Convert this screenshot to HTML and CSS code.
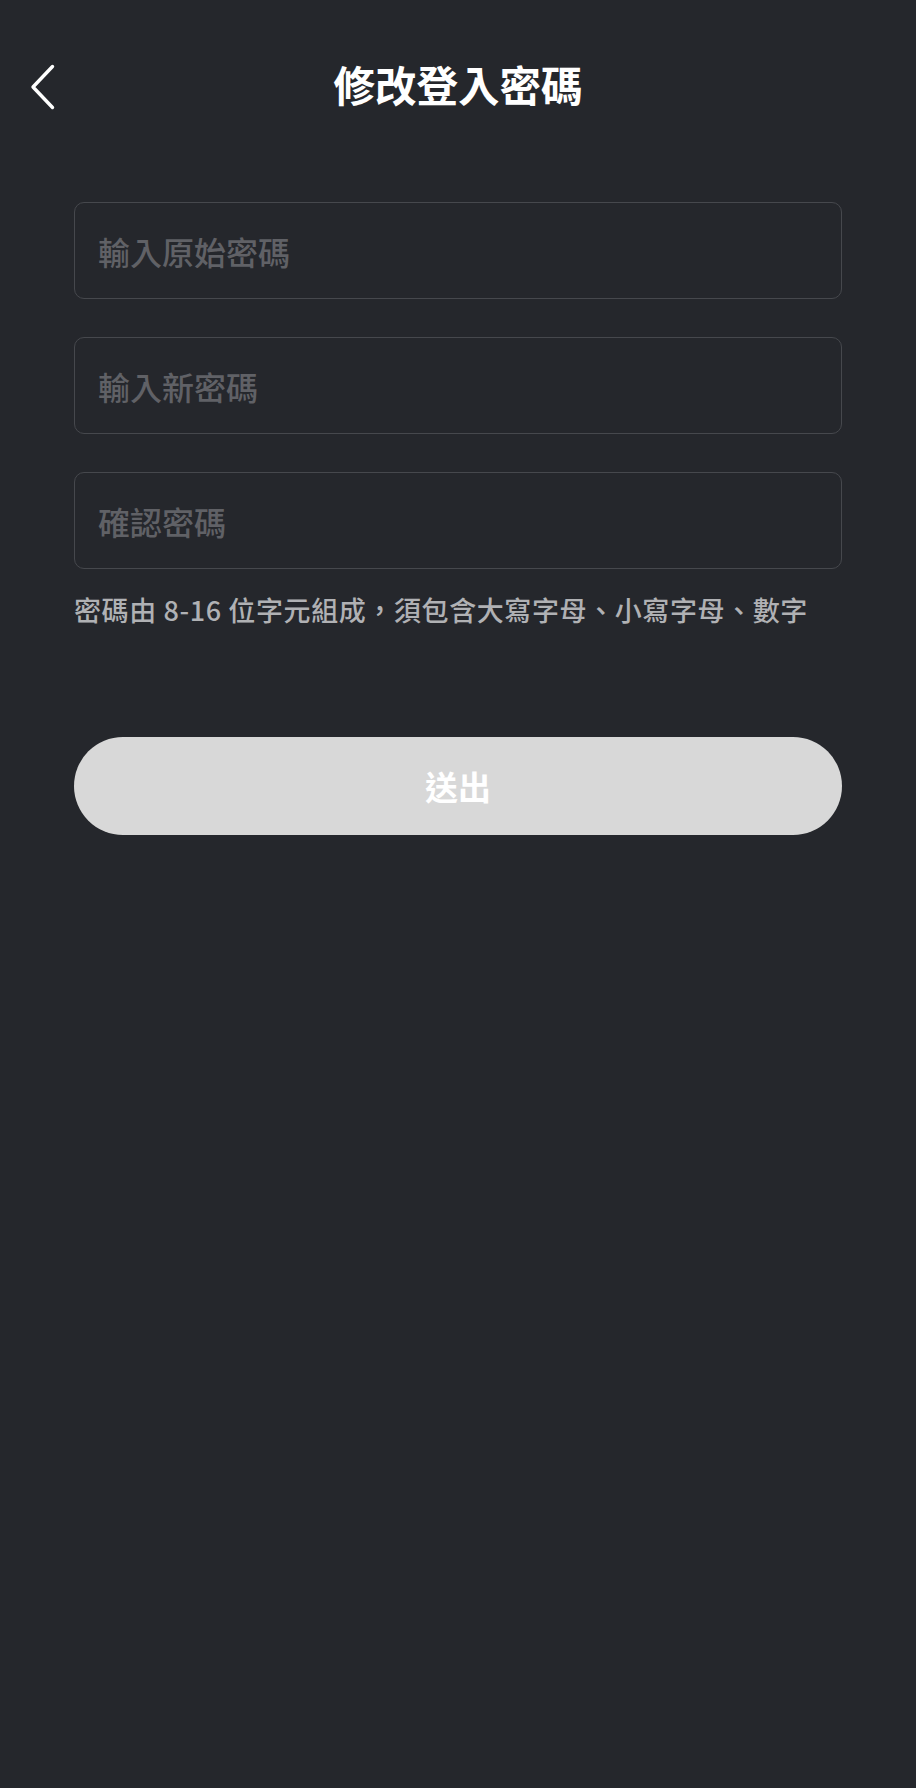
FILE: index.html
```html
<!DOCTYPE html>
<html lang="zh-Hant">
<head>
<meta charset="utf-8">
<title>修改登入密碼</title>
<link rel="stylesheet" href="styles.css">
</head>
<body>
<div class="page">
  <header class="nav">
    <button class="back" aria-label="返回">
      <svg width="26" height="46" viewBox="0 0 26 46" fill="none">
        <path d="M22.5 2.5 L3 23 L22.5 43.5" stroke="#ffffff" stroke-width="3.4" stroke-linecap="round" stroke-linejoin="round"/>
      </svg>
    </button>
    <h1 class="title">修改登入密碼</h1>
    <span class="nav-spacer"></span>
  </header>

  <main class="form">
    <div class="fields">
      <label class="field"><input type="password" placeholder="輸入原始密碼"></label>
      <label class="field"><input type="password" placeholder="輸入新密碼"></label>
      <label class="field"><input type="password" placeholder="確認密碼"></label>
    </div>
    <p class="hint">密碼由 8-16 位字元組成，須包含大寫字母、小寫字母、數字</p>
    <button class="submit">送出</button>
  </main>
</div>
</body>
</html>
```

FILE: styles.css
```css
html, body {
  margin: 0;
  padding: 0;
  background: #25272c;
}

body {
  font-family: "Noto Sans CJK TC", "Noto Sans", sans-serif;
  color: #ffffff;
  min-height: 1788px;
}

.page {
  width: 916px;
}

.nav {
  display: grid;
  grid-template-columns: 120px 1fr 120px;
  align-items: center;
  height: 88px;
  padding-top: 36px;
}

.back {
  display: flex;
  align-items: center;
  background: none;
  border: 0;
  padding: 0 0 0 30px;
  margin-top: 7px;
  height: 88px;
  cursor: pointer;
}

.back svg {
  display: block;
}

.title {
  margin: 0;
  text-align: center;
  font-size: 41.5px;
  font-weight: 700;
  line-height: 88px;
  color: #ffffff;
}

.form {
  display: flex;
  flex-direction: column;
  padding: 78px 74px 0;
}

.fields {
  display: flex;
  flex-direction: column;
  gap: 38px;
}

.field {
  display: flex;
  align-items: center;
  height: 97px;
  box-sizing: border-box;
  border: 1.5px solid #46484d;
  border-radius: 10px;
  padding: 0 23px;
}

.field input {
  flex: 1;
  background: transparent;
  border: 0;
  outline: none;
  font-family: "Noto Sans CJK TC", "Noto Sans", sans-serif;
  font-size: 32px;
  font-weight: 500;
  color: #ffffff;
  padding: 0;
}

.field input::placeholder {
  color: #606166;
}

.hint {
  margin: 21px 0 0;
  font-size: 27px;
  font-weight: 500;
  letter-spacing: 0.6px;
  line-height: 40px;
  color: #b0b1b4;
  white-space: nowrap;
}

.submit {
  margin-top: 107px;
  height: 98px;
  border: 0;
  border-radius: 49px;
  background: #d8d8d8;
  color: #ffffff;
  font-family: "Noto Sans CJK TC", "Noto Sans", sans-serif;
  font-size: 33px;
  font-weight: 700;
  cursor: pointer;
}
```
